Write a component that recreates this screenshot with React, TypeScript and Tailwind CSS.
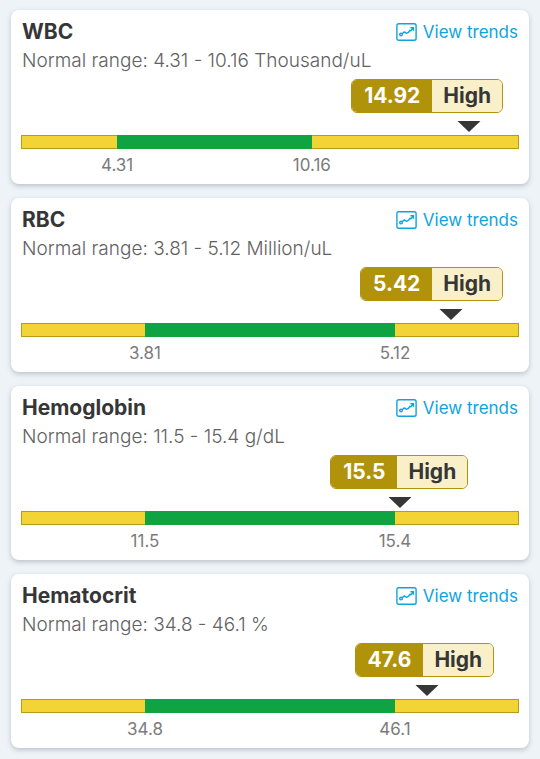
interface LabResult {
  name: string;
  low: string;
  high: string;
  unit: string;
  value: string;
  flag: string;
  // positions along the scale, in percent of its width
  lowAt: number;
  highAt: number;
  valueAt: number;
  // room kept between the badge and the right end of the scale
  badgeInset: number;
}

const RESULTS: LabResult[] = [
  { name: "WBC", low: "4.31", high: "10.16", unit: "Thousand/uL", value: "14.92", flag: "High", lowAt: 19.3, highAt: 58.4, valueAt: 90, badgeInset: 3.2 },
  { name: "RBC", low: "3.81", high: "5.12", unit: "Million/uL", value: "5.42", flag: "High", lowAt: 24.9, highAt: 75.1, valueAt: 86.4, badgeInset: 3.2 },
  { name: "Hemoglobin", low: "11.5", high: "15.4", unit: "g/dL", value: "15.5", flag: "High", lowAt: 24.9, highAt: 75.1, valueAt: 76.2, badgeInset: 10.2 },
  { name: "Hematocrit", low: "34.8", high: "46.1", unit: "%", value: "47.6", flag: "High", lowAt: 24.9, highAt: 75.1, valueAt: 81.6, badgeInset: 5 },
];

function TrendIcon() {
  return (
    <svg viewBox="0 0 21 18" className="h-[18px] w-[21px]" fill="none" stroke="currentColor" strokeWidth="1.4" aria-hidden="true">
      <rect x="0.9" y="0.7" width="19.2" height="16.6" rx="1.8" />
      <circle cx="5" cy="11.6" r="1.3" />
      <path d="M6.1 10.7 8.4 8.9l2 1.4 2.1-.9 1.3-2.1 1.1.5 2.4-3" strokeLinejoin="round" />
      <path d="M14.4 4.7h3v3" />
    </svg>
  );
}

function ResultCard({ result }: { result: LabResult }) {
  const { name, low, high, unit, value, flag, lowAt, highAt, valueAt, badgeInset } = result;

  return (
    <li className="rounded-lg bg-white px-[10px] py-2 shadow-[0_2px_5px_rgba(60,70,90,0.28)]">
      <div className="flex items-center justify-between px-px">
        <h2 className="text-[21px] leading-7 font-bold text-[#363636]">{name}</h2>
        <a href="#trends" className="flex items-center gap-[6px] text-[17px] leading-7 text-[#0fa3dd]">
          <TrendIcon />
          View trends
        </a>
      </div>
      <p className="mt-[3px] px-px text-[19px] leading-6 font-light text-[#626262]">
        Normal range: {low} - {high} {unit}
      </p>

      <div className="mt-[6px] flex justify-end" style={{ paddingRight: `${badgeInset}%` }}>
        <div className="flex h-[34px] items-stretch overflow-hidden rounded-md border border-[#b0930b] text-[21px] leading-8 font-bold">
          <span className="bg-[#b0930b] px-3 text-white">{value}</span>
          <span className="bg-[#f9f0ca] px-[11px] text-[#363636]">{flag}</span>
        </div>
      </div>

      <div className="mt-2 flex">
        <div style={{ width: `${valueAt}%` }} />
        <div className="flex w-0 justify-center">
          <svg viewBox="0 0 24 11" className="h-[11px] w-6 shrink-0" aria-hidden="true">
            <path d="M0.5 0h23L12 11z" fill="#363636" />
          </svg>
        </div>
      </div>

      <div className="mt-[3px] flex h-[14px]">
        <div className="border border-r-0 border-[#b89a14] bg-[#f2d437]" style={{ width: `${lowAt}%` }} />
        <div className="bg-[#10a342]" style={{ width: `${highAt - lowAt}%` }} />
        <div className="flex-1 border border-l-0 border-[#b89a14] bg-[#f2d437]" />
      </div>

      <div className="mt-[5px] flex text-[17px] leading-[22px] text-[#7b7b7b]">
        <div style={{ width: `${lowAt}%` }} />
        <span className="flex w-0 justify-center">{low}</span>
        <div style={{ width: `${highAt - lowAt}%` }} />
        <span className="flex w-0 justify-center">{high}</span>
      </div>
    </li>
  );
}

export default function App() {
  return (
    <main className="min-h-screen bg-[#eef3f8] px-[11px] py-[10px] font-['Inter','Liberation_Sans',sans-serif]">
      <ul className="flex flex-col gap-[14px]">
        {RESULTS.map((result) => (
          <ResultCard key={result.name} result={result} />
        ))}
      </ul>
    </main>
  );
}
